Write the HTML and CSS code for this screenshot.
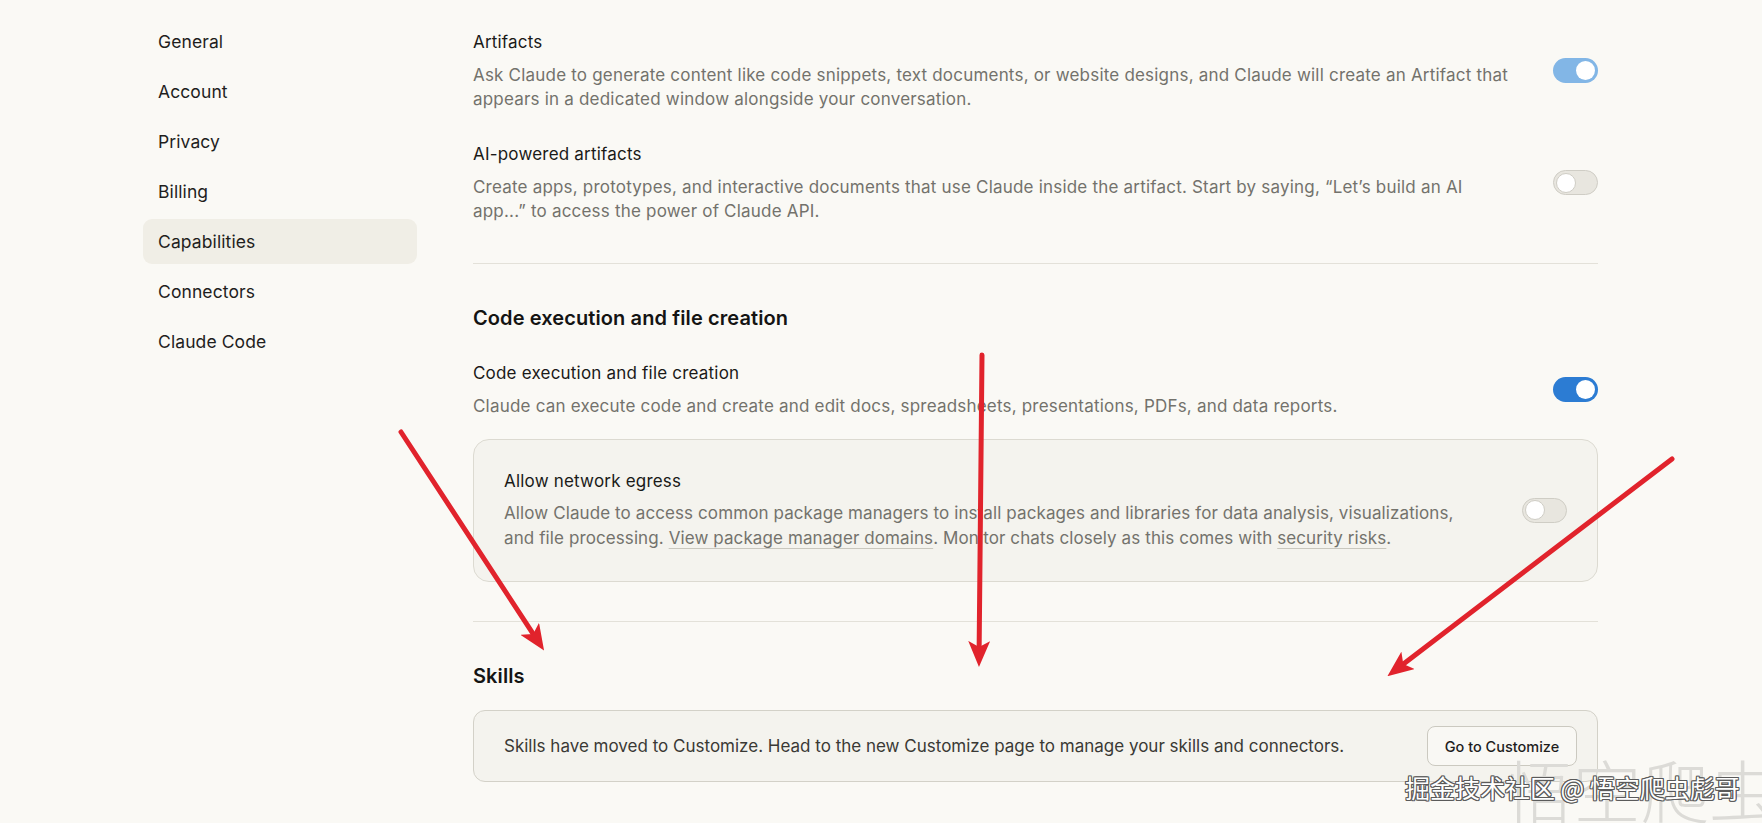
FILE: index.html
```html
<!DOCTYPE html>
<html lang="en">
<head>
<meta charset="utf-8">
<title>Settings - Capabilities</title>
<link rel="stylesheet" href="styles.css">
</head>
<body>
<div class="page">
  <nav class="sidebar">
    <a class="nav-item">General</a>
    <a class="nav-item">Account</a>
    <a class="nav-item">Privacy</a>
    <a class="nav-item">Billing</a>
    <a class="nav-item active">Capabilities</a>
    <a class="nav-item">Connectors</a>
    <a class="nav-item">Claude Code</a>
  </nav>

  <main class="content">
    <section class="group">
      <div class="setting">
        <div class="setting-text">
          <div class="setting-title">Artifacts</div>
          <p class="setting-desc">Ask Claude to generate content like code snippets, text documents, or website designs, and Claude will create an Artifact that appears in a dedicated window alongside your conversation.</p>
        </div>
        <span class="toggle toggle-on toggle-muted"><span class="knob"></span></span>
      </div>
      <div class="setting">
        <div class="setting-text">
          <div class="setting-title">AI-powered artifacts</div>
          <p class="setting-desc">Create apps, prototypes, and interactive documents that use Claude inside the artifact. Start by saying, “Let’s build an AI app...” to access the power of Claude API.</p>
        </div>
        <span class="toggle toggle-off"><span class="knob"></span></span>
      </div>
    </section>

    <hr class="divider">

    <section class="group">
      <h2 class="section-heading">Code execution and file creation</h2>
      <div class="setting">
        <div class="setting-text">
          <div class="setting-title">Code execution and file creation</div>
          <p class="setting-desc">Claude can execute code and create and edit docs, spreadsheets, presentations, PDFs, and data reports.</p>
        </div>
        <span class="toggle toggle-on"><span class="knob"></span></span>
      </div>
      <div class="subcard">
        <div class="setting setting-wide">
          <div class="setting-text">
            <div class="setting-title">Allow network egress</div>
            <p class="setting-desc card-desc">Allow Claude to access common package managers to install packages and libraries for data analysis, visualizations, and file processing. <a class="link">View package manager domains</a>. Monitor chats closely as this comes with <a class="link">security risks</a>.</p>
          </div>
          <span class="toggle toggle-off"><span class="knob"></span></span>
        </div>
      </div>
    </section>

    <hr class="divider divider-tight">

    <section class="group group-last">
      <h2 class="section-heading heading-tight">Skills</h2>
      <div class="notice">
        <p class="notice-text">Skills have moved to Customize. Head to the new Customize page to manage your skills and connectors.</p>
        <button class="btn">Go to Customize</button>
      </div>
    </section>
  </main>
</div>

<svg class="annotations" width="1762" height="823" viewBox="0 0 1762 823" xmlns="http://www.w3.org/2000/svg">
  <defs>
    <marker id="head" viewBox="0 0 26 22" refX="12" refY="11" markerWidth="26" markerHeight="22" markerUnits="userSpaceOnUse" orient="auto">
      <path d="M0 0 L26 11 L0 22 L6 11 Z" fill="#e1232c"/>
    </marker>
  </defs>
  <g stroke="#e1232c" stroke-width="5" stroke-linecap="round" fill="none">
    <line x1="401" y1="432" x2="536.4" y2="638.9" marker-end="url(#head)"/>
    <line x1="982" y1="355" x2="979.1" y2="653" marker-end="url(#head)"/>
    <line x1="1672" y1="459" x2="1398.5" y2="667.7" marker-end="url(#head)"/>
  </g>
</svg>

<div class="watermark-big">悟空爬虫</div>
<div class="watermark">掘金技术社区 @ 悟空爬虫彪哥</div>
</body>
</html>
```

FILE: styles.css
```css
* {
  box-sizing: border-box;
}

html, body {
  margin: 0;
  padding: 0;
}

body {
  width: 1762px;
  height: 823px;
  overflow: hidden;
  position: relative;
  background: #faf9f5;
  font-family: Inter, "Noto Sans", "Liberation Sans", sans-serif;
  color: #1f1e1d;
}

.page {
  display: flex;
  gap: 56px;
  padding-left: 143px;
}

/* Sidebar */
.sidebar {
  width: 274px;
  flex-shrink: 0;
  display: flex;
  flex-direction: column;
  gap: 5px;
  padding-top: 19px;
}

.nav-item {
  height: 45px;
  display: flex;
  align-items: center;
  padding-left: 15px;
  font-size: 17.5px;
  color: #1f1e1d;
  border-radius: 9px;
  letter-spacing: 0.1px;
}

.nav-item.active {
  background: #f0eee6;
}

/* Content */
.content {
  width: 1125px;
  padding-top: 30px;
}

.setting {
  display: flex;
  align-items: center;
  gap: 38px;
}

.setting + .setting {
  margin-top: 31px;
}

.setting-wide {
  gap: 48px;
}

.setting-text {
  flex: 1;
  min-width: 0;
}

.setting-title {
  font-size: 17px;
  line-height: 24px;
  letter-spacing: 0.2px;
  color: #1a1a18;
}

.setting-desc {
  margin: 9px 0 0;
  font-size: 17px;
  line-height: 24px;
  letter-spacing: 0.2px;
  color: #73726c;
}

.card-desc {
  margin-top: 8px;
  line-height: 25px;
  letter-spacing: 0.1px;
}

.link {
  color: inherit;
  text-decoration: underline;
  text-decoration-color: #c9c7be;
  text-underline-offset: 4px;
  text-decoration-thickness: 1px;
}

.divider {
  margin: 40px 0 0;
  border: none;
  border-top: 1px solid #e3e1d9;
  height: 0;
}

.divider-tight {
  margin-top: 39px;
}

.divider + .group {
  padding-top: 41px;
}

.divider + .group-last {
  padding-top: 41px;
}

.section-heading {
  margin: 0 0 30px;
  font-size: 20px;
  line-height: 26px;
  font-weight: 600;
  letter-spacing: 0.1px;
  color: #141413;
}

.heading-tight {
  margin-bottom: 21px;
}

/* Toggles */
.toggle {
  width: 45px;
  height: 25px;
  border-radius: 13px;
  flex-shrink: 0;
  display: flex;
  align-items: center;
  padding: 0 3px;
}

.toggle .knob {
  width: 19px;
  height: 19px;
  border-radius: 50%;
  background: #ffffff;
}

.toggle-on {
  background: #2c7cd3;
  justify-content: flex-end;
}

.toggle-on.toggle-muted {
  background: #82b6e6;
}

.toggle-off {
  background: #e8e6df;
  border: 1px solid #cfcdc5;
  justify-content: flex-start;
  padding: 0 2px;
}

.toggle-off .knob {
  width: 20px;
  height: 20px;
  border: 1px solid #cfcdc5;
}

/* Sub-card */
.subcard {
  margin-top: 21px;
  border: 1px solid #dcdad1;
  border-radius: 16px;
  background: #f4f3ee;
  padding: 29px 30px 30px 30px;
}

/* Skills notice */
.notice {
  display: flex;
  align-items: center;
  justify-content: space-between;
  border: 1px solid #d3d1c8;
  border-radius: 12px;
  background: #f4f3ee;
  padding: 15px 20px 15px 30px;
}

.notice-text {
  margin: 0;
  font-size: 17px;
  line-height: 24px;
  color: #3a3935;
}

.btn {
  height: 40px;
  width: 150px;
  border: 1px solid #cbc9c0;
  border-radius: 8px;
  background: #f9f8f4;
  font-family: Inter, "Noto Sans", sans-serif;
  font-size: 14.5px;
  font-weight: 500;
  color: #1f1e1d;
  padding: 0;
}

/* Overlays */
.annotations {
  position: absolute;
  left: 0;
  top: 0;
  pointer-events: none;
  z-index: 5;
}

.watermark-big {
  position: absolute;
  left: 1505px;
  top: 755px;
  font-family: "Noto Sans CJK SC", sans-serif;
  font-weight: 300;
  font-size: 68px;
  line-height: 1;
  color: #dcdbd7;
  white-space: nowrap;
  z-index: 6;
}

.watermark {
  position: absolute;
  left: 1405px;
  top: 772px;
  font-family: "Noto Sans CJK SC", sans-serif;
  font-size: 25px;
  line-height: 30px;
  color: #ffffff;
  white-space: nowrap;
  z-index: 7;
  text-shadow: 1px 1px 0 #5a5a5a, -1px -1px 0 #5a5a5a, 1px -1px 0 #5a5a5a, -1px 1px 0 #5a5a5a, 1px 0 0 #5a5a5a, -1px 0 0 #5a5a5a, 0 1px 0 #5a5a5a, 0 -1px 0 #5a5a5a;
}
```
